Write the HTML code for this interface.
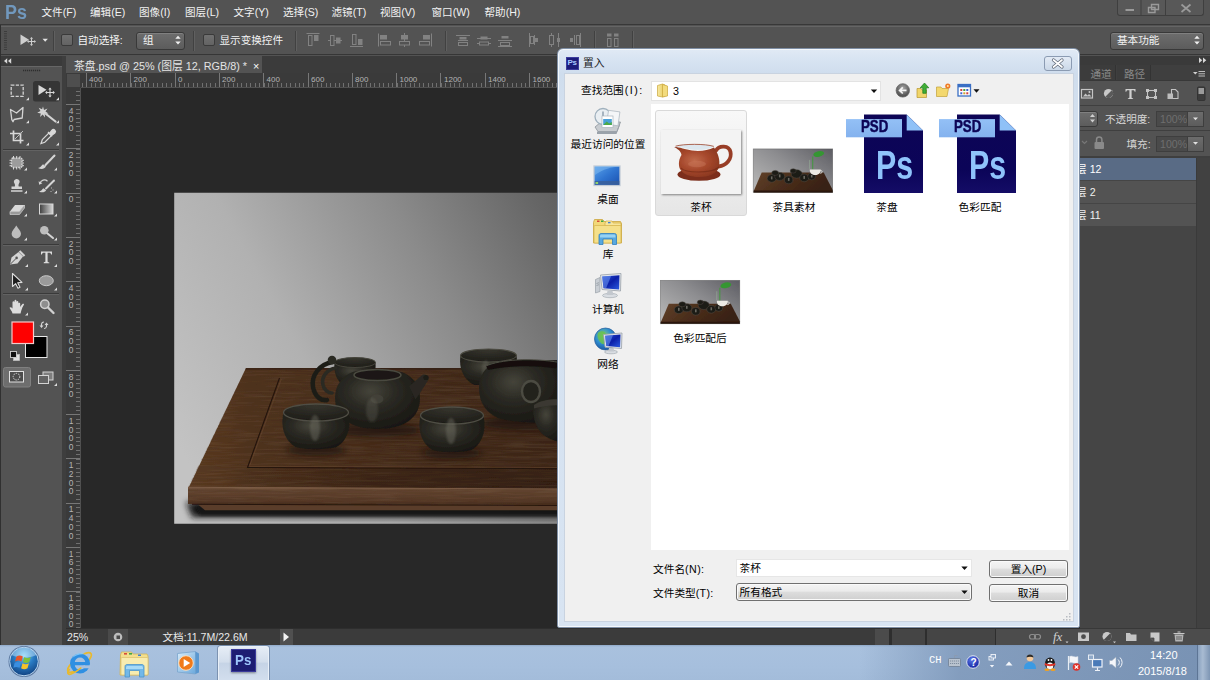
<!DOCTYPE html>
<html lang="zh-CN">
<head>
<meta charset="utf-8">
<title>Photoshop - 置入</title>
<style>
*{box-sizing:border-box;margin:0;padding:0}
html,body{width:1210px;height:680px;overflow:hidden;background:#535353}
body{position:relative;font-family:"Liberation Sans","Noto Sans CJK SC",sans-serif;font-size:10.6px;color:#ececec}
.a{position:absolute}
.t{position:absolute;white-space:nowrap;line-height:14px;font-size:10.6px}
svg{position:absolute;left:0;top:0;overflow:visible}
/* ---------- Photoshop chrome ---------- */
#menubar{left:0;top:0;width:1210px;height:25px;background:#535353;border-bottom:1px solid #383838}
#menubar .t{top:5px;color:#f2f2f2}
#pslogo{left:5px;top:0px;font-size:19.5px;font-weight:bold;color:#7198bd;line-height:24px;transform:scaleX(.92);transform-origin:0 0}
#winbtns{left:1117px;top:0;width:87px;height:16px;border:1px solid #3f3f3f;border-top:none;border-radius:0 0 3px 3px;background:#585858}
#optbar{left:0;top:26px;width:1210px;height:29px;background:#535353;border-top:1px solid #656565;border-bottom:1px solid #363636}
#optbar .t{top:6.3px;color:#f2f2f2}
.chk{position:absolute;width:12px;height:12px;border-radius:2px;background:linear-gradient(#707070,#636363);border:1px solid #3a3a3a}
.vsep{position:absolute;top:4px;height:20px;width:2px;border-left:1px solid #414141;border-right:1px solid #606060}
.sel{position:absolute;border:1px solid #393939;border-radius:3px;background:linear-gradient(#6d6d6d,#5c5c5c);box-shadow:inset 0 1px 0 #808080}
#toolcol{left:0;top:56px;width:63px;height:589px;background:#535353;border-left:1px solid #3c3c3c;border-right:1px solid #3a3a3a;box-shadow:inset 0 11px 0 #666}
#toolhead{left:0;top:56px;width:62px;height:10px;background:#3a3a3a}
#toolgap{left:62px;top:56px;width:4px;height:589px;background:#3e3e3e}
#tabbar{left:66px;top:56px;width:1014px;height:17px;background:#3b3b3b}
#tab{left:66px;top:56px;width:196px;height:17px;background:#535353;color:#e4e4e4;font-size:10.8px;line-height:16px;white-space:nowrap;padding-left:8px;padding-top:1.5px}
#hruler{left:66px;top:73px;width:1014px;height:15px;background:#3a3a3a;border-bottom:1px solid #505050}
#hticks{left:81px;top:73px;width:1000px;height:14px;
 background:
 repeating-linear-gradient(90deg,#777 0,#777 1px,transparent 1px,transparent 44.3px) 5.2px 0/100% 14px no-repeat,
 repeating-linear-gradient(90deg,#707070 0,#707070 1px,transparent 1px,transparent 4.43px) 0.75px 10px/100% 4px no-repeat}
#rcorner{left:66px;top:73px;width:15px;height:15px;background:#4e4e4e;border:1px solid #3a3a3a}
#vruler{left:66px;top:88px;width:15px;height:540px;background:#3a3a3a;border-right:1px solid #505050}
#vticks{left:66px;top:88px;width:14px;height:540px;
 background:
 repeating-linear-gradient(180deg,#777 0,#777 1px,transparent 1px,transparent 44.3px) 0 16.1px/14px 100% no-repeat,
 repeating-linear-gradient(180deg,#707070 0,#707070 1px,transparent 1px,transparent 4.43px) 10px 2.8px/4px 100% no-repeat}
.rl{position:absolute;font-size:8px;color:#b4b4b4;line-height:8px;white-space:nowrap}
.vl{position:absolute;left:68px;width:6px;font-size:8.4px;color:#b4b4b4;line-height:8.8px;text-align:center;word-break:break-all}
#canvas{left:81px;top:88px;width:999px;height:540px;background:#282828}
#statusbar{left:66px;top:628px;width:1014px;height:17px;background:#3b3b3b;border-top:1px solid #2e2e2e}
#statusbar .t{top:1px;color:#e8e8e8}
#rightpanels{left:1080px;top:56px;width:130px;height:589px;background:#535353}
</style>
</head>
<body>
<!-- ===== menubar ===== -->
<div id="menubar" class="a">
  <div id="pslogo" class="a">Ps</div>
  <div class="t" style="left:41.5px">文件(F)</div>
  <div class="t" style="left:90px">编辑(E)</div>
  <div class="t" style="left:139px">图像(I)</div>
  <div class="t" style="left:185px">图层(L)</div>
  <div class="t" style="left:233.5px">文字(Y)</div>
  <div class="t" style="left:283px">选择(S)</div>
  <div class="t" style="left:331.5px">滤镜(T)</div>
  <div class="t" style="left:380px">视图(V)</div>
  <div class="t" style="left:431.5px">窗口(W)</div>
  <div class="t" style="left:484.5px">帮助(H)</div>
  <div id="winbtns" class="a"></div>
</div>
<!-- ===== options bar ===== -->
<div id="optbar" class="a">
  <div class="vsep" style="left:53px"></div>
  <div class="chk" style="left:60.5px;top:7px"></div>
  <div class="t" style="left:77.5px">自动选择:</div>
  <div class="sel" style="left:136px;top:5px;width:49px;height:18px"></div>
  <div class="t" style="left:143px">组</div>
  <div class="vsep" style="left:193px"></div>
  <div class="chk" style="left:202.5px;top:7px"></div>
  <div class="t" style="left:219.5px">显示变换控件</div>
  <div class="vsep" style="left:295px"></div>
  <div class="vsep" style="left:445px"></div>
  <div class="vsep" style="left:594px"></div>
  <div class="vsep" style="left:632px"></div>
  <div class="sel" style="left:1110px;top:5px;width:94px;height:17.5px"></div>
  <div class="t" style="left:1117px">基本功能</div>
</div>
<div class="a" style="left:0;top:25px;width:1px;height:620px;background:#303030;z-index:2"></div>
<!-- ===== tools ===== -->
<div id="toolcol" class="a"></div>
<div id="toolhead" class="a"></div>
<div id="toolgap" class="a"></div>
<!-- ===== document ===== -->
<div id="tabbar" class="a"></div>
<div id="tab" class="a">茶盘.psd @ 25% (图层 12, RGB/8) * <span style="margin-left:3px;color:#fff">×</span></div>
<div id="hruler" class="a"></div>
<div id="vruler" class="a"></div>
<div id="canvas" class="a"></div>
<div id="hticks" class="a"></div>
<div id="vticks" class="a"></div>
<div id="rcorner" class="a"></div>
<div class="rl" style="left:89px;top:76px">400</div>
<div class="rl" style="left:133.5px;top:76px">200</div>
<div class="rl" style="left:178px;top:76px">0</div>
<div class="rl" style="left:222px;top:76px">200</div>
<div class="rl" style="left:266.5px;top:76px">400</div>
<div class="rl" style="left:311px;top:76px">600</div>
<div class="rl" style="left:355px;top:76px">800</div>
<div class="rl" style="left:399.5px;top:76px">1000</div>
<div class="rl" style="left:444px;top:76px">1200</div>
<div class="rl" style="left:488px;top:76px">1400</div>
<div class="rl" style="left:532.5px;top:76px">1600</div>
<div class="vl" style="top:106.7px">400</div>
<div class="vl" style="top:151.0px">200</div>
<div class="vl" style="top:195.3px">0</div>
<div class="vl" style="top:239.6px">200</div>
<div class="vl" style="top:283.9px">400</div>
<div class="vl" style="top:328.2px">600</div>
<div class="vl" style="top:372.5px">800</div>
<div class="vl" style="top:416.8px">1000</div>
<div class="vl" style="top:461.1px">1200</div>
<div class="vl" style="top:505.4px">1400</div>
<div class="vl" style="top:549.7px">1600</div>
<div class="vl" style="top:594.0px">1800</div>
<div id="statusbar" class="a">
  <div class="t" style="left:1px">25%</div>
  <div class="a" style="left:42px;top:0;width:20px;height:16px;background:#4a4a4a"></div>
  <div class="t" style="left:96.5px">文档:11.7M/22.6M</div>
  <div class="a" style="left:214px;top:0;width:13px;height:16px;background:#505050"></div>
  <div class="a" style="left:809px;top:0;width:14px;height:16px;background:#4b4b4b"></div>
  <div class="a" style="left:823px;top:0;width:2.5px;height:16px;background:#2e2e2e"></div>
  <div class="a" style="left:825.5px;top:0;width:33.5px;height:16px;background:#454545"></div>
  <div class="a" style="left:859px;top:0;width:2px;height:16px;background:#2e2e2e"></div>
  <div class="a" style="left:861px;top:0;width:67.5px;height:16px;background:#454545"></div>
  <div class="a" style="left:928.5px;top:0;width:1.5px;height:16px;background:#2e2e2e"></div>
  <div class="a" style="left:930px;top:0;width:90px;height:16px;background:#4c4c4c"></div>
</div>
<!-- ===== right panels ===== -->
<div id="rightpanels" class="a"></div>
<!-- ===== canvas picture ===== -->
<svg width="1210" height="680" viewBox="0 0 1210 680">
 <defs>
  <linearGradient id="bgG" gradientUnits="userSpaceOnUse" x1="175" y1="440" x2="620" y2="200"><stop offset="0" stop-color="#c3c3c3"/><stop offset=".3" stop-color="#b1b1b1"/><stop offset=".6" stop-color="#8b8b8b"/><stop offset=".85" stop-color="#666666"/><stop offset="1" stop-color="#545454"/></linearGradient>
  <linearGradient id="woodTop" gradientUnits="userSpaceOnUse" x1="190" y1="0" x2="600" y2="0"><stop offset="0" stop-color="#59391f"/><stop offset=".15" stop-color="#4d301b"/><stop offset=".55" stop-color="#422918"/><stop offset="1" stop-color="#382214"/></linearGradient>
  <linearGradient id="woodFront" x1="0" y1="0" x2="0" y2="1"><stop offset="0" stop-color="#7d5e45"/><stop offset=".14" stop-color="#634530"/><stop offset=".75" stop-color="#553725"/><stop offset="1" stop-color="#3e2617"/></linearGradient>
  <linearGradient id="bandG" gradientUnits="userSpaceOnUse" x1="230" y1="0" x2="380" y2="0"><stop offset="0" stop-color="#1a0d05" stop-opacity="0"/><stop offset="1" stop-color="#1a0d05" stop-opacity=".25"/></linearGradient>
  <radialGradient id="cupG" cx=".42" cy=".35" r=".7"><stop offset="0" stop-color="#45443a"/><stop offset=".4" stop-color="#2b2a24"/><stop offset="1" stop-color="#171611"/></radialGradient>
  <radialGradient id="cupIn" cx=".5" cy=".1" r=".9"><stop offset="0" stop-color="#35342d"/><stop offset="1" stop-color="#1d1c17"/></radialGradient>
  <linearGradient id="hl" x1="0" x2="1"><stop offset="0" stop-color="#8a897c" stop-opacity="0"/><stop offset=".5" stop-color="#8a897c" stop-opacity=".55"/><stop offset="1" stop-color="#8a897c" stop-opacity="0"/></linearGradient>
  <filter id="bl1" x="-20%" y="-20%" width="140%" height="140%"><feGaussianBlur stdDeviation="1.100"/></filter>
  <filter id="bl3" x="-20%" y="-80%" width="140%" height="260%"><feGaussianBlur stdDeviation="3.200"/></filter>
  <filter id="soft" x="-5%" y="-5%" width="110%" height="110%"><feGaussianBlur stdDeviation=".550"/></filter>
  <filter id="grain" x="0" y="0" width="100%" height="100%"><feTurbulence type="fractalNoise" baseFrequency=".012 .420" numOctaves="3" seed="7"/><feColorMatrix type="matrix" values="0 0 0 0 .08  0 0 0 0 .04  0 0 0 0 .02  1.100 0 0 0 -.400"/></filter>
  <filter id="grain2" x="0" y="0" width="100%" height="100%"><feTurbulence type="fractalNoise" baseFrequency=".030 .550" numOctaves="2" seed="11"/><feColorMatrix type="matrix" values="0 0 0 0 .55  0 0 0 0 .38  0 0 0 0 .25  1.400 0 0 0 -.620"/></filter>
  <clipPath id="imgClip"><rect x="174.200" y="192.800" width="460" height="331"/></clipPath>
  <clipPath id="trayClip"><path d="M246 368h400v137.500l-458-1.500v-17z"/></clipPath>
 </defs>
 <g clip-path="url(#imgClip)">
  <rect x="174" y="192" width="470" height="333" fill="url(#bgG)"/>
  <!-- ground shadow -->
  <path d="M186 502h461v15.500h-455z" fill="#161616" filter="url(#bl3)"/><path d="M196 506h451v9.500h-447z" fill="#141414" opacity=".85" filter="url(#bl1)"/>
  <g filter="url(#soft)">
  <!-- tray top -->
  <path d="M246 368h400v121h-458z" fill="url(#woodTop)"/>
  <!-- front face -->
  <path d="M188 487l458 2v16.500l-458-1.500z" fill="url(#woodFront)"/>
  <g clip-path="url(#trayClip)"><rect x="186" y="366" width="462" height="142" filter="url(#grain)"/><rect x="186" y="366" width="462" height="142" filter="url(#grain2)" opacity=".18"/></g>
  <path d="M246 368h400v1.800h-401z" fill="#2a170e" opacity=".55"/><path d="M247.500 467.500l400 1.500v20l-459-2z" fill="url(#bandG)"/>
  <!-- groove -->
  <path d="M279.500 378l-32 89.500l400 1.500" fill="none" stroke="#24130a" stroke-width="1.100"/>
  <path d="M281.300 379l-31.800 87.300l398 1.500" fill="none" stroke="#6d4c35" stroke-width=".8" opacity=".6"/>
  <path d="M188 487.300l458 2" stroke="#80604a" stroke-width="1.100" opacity=".75"/>
  <path d="M198 504.500h448v5.800h-441z" fill="#5a3d29"/><path d="M192 504.300l454 1.400" stroke="#26150c" stroke-width="1.100"/>
  </g>
  <!-- contact shadows -->
  <g filter="url(#bl3)" opacity=".6"><ellipse cx="316" cy="450" rx="30" ry="6" fill="#150d07"/><ellipse cx="452" cy="453" rx="30" ry="6" fill="#150d07"/><ellipse cx="378" cy="430" rx="42" ry="7" fill="#150d07"/><ellipse cx="525" cy="423" rx="44" ry="7" fill="#150d07"/></g>
  <g filter="url(#soft)">
  <!-- back left cup -->
  <path d="M334.500 363c-1 9 2 18 9 22h22c7-4 11-13 10-22z" fill="url(#cupG)"/>
  <ellipse cx="355" cy="362.500" rx="20.500" ry="5" fill="url(#cupIn)" stroke="#45443b" stroke-width="1"/>
  <!-- back right cup -->
  <path d="M460.500 356c-2 12 3 24 14 29h28c11-5 16-17 14-29z" fill="url(#cupG)"/>
  <ellipse cx="488.500" cy="355.500" rx="28" ry="6.500" fill="url(#cupIn)" stroke="#4b4a40" stroke-width="1.100"/>
  <ellipse cx="486" cy="370" rx="4" ry="10" fill="#77766a" opacity=".3" filter="url(#bl1)"/>
  <!-- pitcher -->
  <path d="M479 388c0-16 10-26 26-27l56-1v61c-14 2.500-40 2.500-58-1.500c-16-4-24-16-24-31.500z" fill="url(#cupG)"/>
  <path d="M486 366c14-6.500 46-8.500 74-3.500l-4 6c-26-4-48-2.500-68 1.500z" fill="#12110d"/>
  <path d="M486 366c14-6.500 46-8.500 74-3.500" fill="none" stroke="#4d4c43" stroke-width="1"/>
  <ellipse cx="531" cy="391.500" rx="9" ry="10.500" fill="#23221d" stroke="#4c4b42" stroke-width="2.400"/>
  <!-- right edge cup -->
  <path d="M533.500 405c-2 20 8 36 30 37v-42z" fill="url(#cupG)"/>
  <path d="M534 405c6-5 18-6.500 30-5.500v6c-10-1-22 .5-30 3z" fill="#3a3931"/>
  <!-- teapot handle -->
  <path d="M333 362c-14 2-22 14-20 25c2 10 8 14 14 13" fill="none" stroke="#1f1e19" stroke-width="4.600" stroke-linecap="round"/>
  <path d="M336 368c-9 1-15 9-13 17c1 5 5 8 9 8" fill="none" stroke="#2a2923" stroke-width="3.600" stroke-linecap="round"/>
  <circle cx="332" cy="360" r="4.300" fill="#2b2a24"/>
  <!-- teapot body -->
  <path d="M335 398c0-15 10-25 22-27h40c12 2 23 11 23 27c0 18-13 31-43 31c-28 0-42-13-42-31z" fill="url(#cupG)"/>
  <path d="M409 386c5-3 9-8 13.500-11c3-1.500 7 1.500 6 4.500c-3 5-8 13-13 20z" fill="#292822"/>
  <circle cx="426" cy="377.500" r="2.600" fill="#1b1a15"/>
  <ellipse cx="377.500" cy="375" rx="23.500" ry="5.600" fill="#1a1914" stroke="#4a493f" stroke-width="1.500"/>
  <ellipse cx="377" cy="399" rx="6.500" ry="4.500" fill="#45443b" opacity=".8"/>
  <ellipse cx="372" cy="410" rx="6" ry="12" fill="#77766a" opacity=".25" filter="url(#bl1)"/>
  <!-- front left cup -->
  <path d="M283.500 413c-3 12 0 27 12 34c10 3 30 3 41 0c12-7 15-22 12-34z" fill="url(#cupG)"/>
  <ellipse cx="316" cy="412.500" rx="32.500" ry="8.500" fill="url(#cupIn)" stroke="#4f4e44" stroke-width="1.300"/>
  <ellipse cx="315" cy="428" rx="5" ry="13" fill="#77766a" opacity=".4" filter="url(#bl1)"/>
  <!-- middle cup -->
  <path d="M420.500 416c-3 12 0 27 12 34c10 3 29 3 39 0c12-7 15-22 12-34z" fill="url(#cupG)"/>
  <ellipse cx="452" cy="415.500" rx="31.500" ry="8.500" fill="url(#cupIn)" stroke="#4f4e44" stroke-width="1.300"/>
  <ellipse cx="451" cy="431" rx="5" ry="13" fill="#77766a" opacity=".4" filter="url(#bl1)"/>
  </g>
 </g>
</svg>
<!-- ===== tool & option icons (global coords) ===== -->
<svg width="1210" height="680" viewBox="0 0 1210 680">
 <defs>
  <linearGradient id="gGrad" x1="0" x2="1"><stop offset="0" stop-color="#3c3c3c"/><stop offset="1" stop-color="#d8d8d8"/></linearGradient>
 </defs>
 <!-- window buttons -->
 <g stroke="#9a9a9a" fill="none" stroke-width="1.4">
  <path d="M1125.500 10h8.500" stroke-width="2"/><path d="M1151.500 4.500h7v5h-7z M1148.500 7.500h6.500v5h-6.500z" stroke-width="1.400"/><path d="M1181.500 4.500l9 7.500M1190.500 4.500l-9 7.500" stroke-width="1.700"/>
  <path d="M1141 0v16M1165.500 0v16" stroke="#3f3f3f" stroke-width="1"/>
 </g>
 <!-- options bar: grip, move tool, dropdown arrows -->
 <path d="M5.500 31v19" stroke="#3c3c3c" stroke-width="3" stroke-dasharray="1 1.250"/>
 <path d="M20.5 34.5v10.500l8.500-5.200z" fill="#cfcfcf"/>
 <path d="M31.500 38.200v6.600M28.200 41.500h6.600" stroke="#cfcfcf" stroke-width="1.1" fill="none"/>
 <path d="M31.500 37l1.600 1.800h-3.200zM31.500 46l1.600-1.800h-3.200zM27 41.500l1.800-1.600v3.200zM36 41.500l-1.800-1.600v3.200z" fill="#cfcfcf"/>
 <path d="M42.500 38.800h5.400l-2.700 3z" fill="#e4e4e4"/>
 <path d="M175.300 38.800h5.400l-2.700-3zM175.300 41.400h5.400l-2.700 3z" fill="#f0f0f0"/>
 <path d="M1194.300 38.800h5.400l-2.700-3zM1194.300 41.400h5.400l-2.700 3z" fill="#f0f0f0"/>
 <!-- align icons (dimmed) -->
 <g fill="none" stroke="#828282" stroke-width="1">
  <g id="alT"><path d="M306.500 33.500h13"/><rect x="308.500" y="35.500" width="3.500" height="10"/><rect x="314.500" y="35.500" width="3.500" height="5" fill="#828282"/></g>
  <g><path d="M328 40.500h14"/><rect x="330.500" y="35.500" width="3.500" height="10" fill="#535353"/><rect x="336.500" y="38" width="3.500" height="5" fill="#828282"/></g>
  <g><path d="M350 46.500h13"/><rect x="352.500" y="34.500" width="3.500" height="10"/><rect x="358.500" y="39.500" width="3.500" height="5" fill="#828282"/></g>
  <g><path d="M378.500 33.500v13"/><rect x="380.500" y="35.500" width="6" height="3.500" fill="#828282"/><rect x="380.500" y="41.500" width="10" height="3.500"/></g>
  <g><path d="M404.500 33v14"/><rect x="401.500" y="35.500" width="6" height="3.500" fill="#828282"/><rect x="399.500" y="41.500" width="10" height="3.500" fill="#535353"/></g>
  <g><path d="M431.500 33.500v13"/><rect x="423.500" y="35.500" width="6" height="3.500" fill="#828282"/><rect x="419.500" y="41.500" width="10" height="3.500"/></g>
  <g><path d="M456 35.500h14M458 40.500h10"/><rect x="459.500" y="37" width="7" height="2.500" fill="#828282" stroke="none"/><rect x="458.500" y="42.500" width="9" height="3"/></g>
  <g><path d="M477 38.500h14M477 43.500h14"/><rect x="480.500" y="36.500" width="7" height="3" fill="#828282" stroke="none"/><rect x="479.500" y="42" width="9" height="3" fill="#535353"/></g>
  <g><path d="M498 40.500h14M498 46.500h14"/><rect x="501.500" y="36" width="7" height="2.500" fill="#828282" stroke="none"/><rect x="500.500" y="42.500" width="9" height="3"/></g>
  <g><path d="M529.500 33v14M534.500 35v10"/><rect x="530.500" y="36.500" width="3" height="7"/><rect x="535" y="38" width="3" height="4" fill="#828282" stroke="none"/></g>
  <g><path d="M551.500 33v14M558.500 33v14"/><rect x="549.500" y="35.500" width="4" height="9" fill="#535353"/><rect x="557" y="38" width="3" height="4" fill="#828282" stroke="none"/></g>
  <g><path d="M574.500 35v10M580.500 33v14"/><rect x="570" y="38" width="3" height="4" fill="#828282" stroke="none"/><rect x="576.500" y="35.500" width="3" height="9"/></g>
  <g><rect x="607.500" y="38.500" width="3.500" height="8"/><rect x="614.500" y="38.500" width="3.500" height="8"/><rect x="607" y="33.500" width="4.500" height="3" fill="#828282" stroke="none"/><rect x="614" y="33.500" width="4.500" height="3" fill="#828282" stroke="none"/></g>
 </g>
 <!-- toolbox -->
 <path d="M4 61l3.200-2.800v5.600zM8 61l3.200-2.800v5.600z" fill="#d8d8d8"/>
 <path d="M23 70.500h17.500" stroke="#2e2e2e" stroke-width="1.600" stroke-dasharray="1.200 .8"/>
 <rect x="33" y="81" width="27" height="20.500" rx="2.500" fill="#353535"/>
 <g fill="#dcdcdc">
  <path d="M26 100.300h3v-3zM56 100.300h3v-3zM26 123.300h3v-3zM56 123.300h3v-3zM26 145.500h3v-3zM56 145.500h3v-3zM24 170.500h3v-3zM54 170.500h3v-3zM24 193.500h3v-3zM54 193.500h3v-3zM24 216.500h3v-3zM54 216.500h3v-3zM24 240.500h3v-3zM54 240.500h3v-3zM25 267h3v-3zM54 267h3v-3zM25 290.500h3v-3zM54 290.500h3v-3zM25 315.500h3v-3zM54 386h3v-3z"/>
 </g>
 <g stroke="#3a3a3a" stroke-width="1"><path d="M3 149.500h56M3 244.500h56M3 293.500h56"/></g>
 <g stroke="#626262" stroke-width="1"><path d="M3 150.500h56M3 245.500h56M3 294.500h56"/></g>
 <!-- marquee -->
 <rect x="11.200" y="85.200" width="12" height="11.200" fill="none" stroke="#d4d4d4" stroke-width="1.300" stroke-dasharray="3.200 1.400"/>
 <!-- move -->
 <path d="M38.500 85v10l8-5.200z" fill="#d8d8d8"/>
 <path d="M50 88.800v7.400M46.300 92.500h7.400" stroke="#d8d8d8" stroke-width="1.100"/>
 <path d="M50 87.600l1.700 2h-3.400zM50 97.400l1.700-2h-3.400zM45.100 92.500l2-1.700v3.400zM54.900 92.500l-2-1.700v3.400z" fill="#d8d8d8"/>
 <!-- polygonal lasso -->
 <path d="M10.500 109.500l6 3.500l6.500-5.500l-.8 10.500l-8.200 1.500l-1 2.200l-1.200-2z" fill="none" stroke="#d4d4d4" stroke-width="1.300" stroke-linejoin="round"/>
 <!-- magic wand -->
 <path d="M46 114l9.500 7.500" stroke="#d4d4d4" stroke-width="2.200" stroke-linecap="round"/>
 <path d="M43 106.500l1 3.500l3.500-1.500l-2 3l3 2l-3.700.3l.2 3.700l-2.300-3l-2.700 2.500l.8-3.600l-3.600-.6l3.300-1.800l-1.800-3.200l3.400 1.400z" fill="#d4d4d4"/>
 <!-- crop -->
 <path d="M13.500 130.500v10h10M10 133.500h10.500v10" fill="none" stroke="#d8d8d8" stroke-width="1.700"/>
 <path d="M15 139l8-8" stroke="#bdbdbd" stroke-width="1"/>
 <!-- eyedropper -->
 <path d="M41 143.500l1.300-3.800l6.500-6.500l2.500 2.500l-6.500 6.500z" fill="none" stroke="#d8d8d8" stroke-width="1.200"/>
 <path d="M48 132l4.200 4.200M49.500 133.500l2.500-3.300a1.900 1.900 0 0 1 2.800 2.800l-3.300 2.500z" fill="#d8d8d8" stroke="#d8d8d8" stroke-width="1.300"/>
 <!-- spot healing / patch -->
 <rect x="11.500" y="158" width="10.500" height="9.500" rx="1.500" fill="#9c9c9c" stroke="#d8d8d8" stroke-width="1.300" stroke-dasharray="1.600 1.100"/>
 <path d="M13.500 156v2M16.700 156v2M20 156v2M13.500 167.500v2M16.700 167.500v2M20 167.500v2M9.500 160.300h2M9.500 163h2M9.500 165.700h2M22 160.300h2M22 163h2M22 165.700h2" stroke="#d8d8d8" stroke-width="1"/>
 <!-- brush -->
 <path d="M54.500 155.500l-9 9.500" stroke="#d4d4d4" stroke-width="2" stroke-linecap="round"/>
 <path d="M38 168c2.500-.3 3.500-2.800 5-3.800l3 2.300c-1.500 2.500-4.500 3.300-8 1.500z" fill="#d4d4d4"/>
 <!-- stamp -->
 <path d="M16.800 179a2.800 2.800 0 0 1 2.200 4.600c-.6.900-.6 1.900-.3 2.900h3.300v2.500h-10.500v-2.500h3.300c.3-1 .3-2-.3-2.900a2.800 2.800 0 0 1 2.300-4.600z" fill="#d4d4d4"/>
 <path d="M11 191h11.500" stroke="#d4d4d4" stroke-width="1.500"/>
 <!-- history brush -->
 <path d="M54 180.500l-8 8" stroke="#d4d4d4" stroke-width="1.900" stroke-linecap="round"/>
 <path d="M39 191.500c2.300-.2 3.200-2.400 4.500-3.300l2.600 2c-1.300 2.200-4 2.900-7.100 1.300z" fill="#d4d4d4"/>
 <path d="M40 183.500a4.500 4.500 0 0 1 7.500-2.300" fill="none" stroke="#d4d4d4" stroke-width="1.200"/>
 <path d="M38.600 181.200l.6 3.600l3.200-1.600z" fill="#d4d4d4"/>
 <path d="M51.500 187.500v1M53 189.500v1M51 191v1" stroke="#bbb" stroke-width="1"/>
 <!-- eraser -->
 <path d="M10 211.500l5-6.500h9.500l-5 6.500z" fill="#d8d8d8"/>
 <path d="M10 211.500h9.500l5-6.500v3l-5 6.500h-9.500z" fill="#9a9a9a" stroke="#d0d0d0" stroke-width=".7"/>
 <!-- gradient -->
 <rect x="39.500" y="204" width="13.500" height="10" fill="url(#gGrad)" stroke="#d8d8d8" stroke-width="1"/>
 <!-- blur drop -->
 <path d="M16.300 225.500c1.800 3 4.700 5.500 4.700 8.300a4.700 4.700 0 0 1-9.400 0c0-2.800 2.900-5.300 4.700-8.300z" fill="#bdbdbd"/>
 <!-- dodge -->
 <circle cx="44.300" cy="230.300" r="4.300" fill="#bdbdbd"/>
 <path d="M47.500 233.500l5.500 4.500" stroke="#d4d4d4" stroke-width="2" stroke-linecap="round"/>
 <!-- pen -->
 <path d="M10 264.500l1.500-7l7-5.500l4.500 4.500l-5.500 7z" fill="#d4d4d4"/>
 <path d="M10.500 264l5.500-5.500" stroke="#535353" stroke-width="1"/>
 <circle cx="16.600" cy="257.900" r="1.300" fill="#535353"/>
 <path d="M19.500 251l5 5" stroke="#d4d4d4" stroke-width="2.200"/>
 <!-- type -->
 <path d="M41 251.500h11v3h-.9c-.2-1.300-.8-1.800-2.100-1.800h-1.400v8.500c0 .9.500 1.100 1.700 1.200v.8h-5.600v-.8c1.200-.1 1.700-.3 1.700-1.200v-8.500h-1.400c-1.300 0-1.900.5-2.100 1.800h-.9z" fill="#dcdcdc"/>
 <!-- path select -->
 <path d="M12.500 273.500v13l3.200-2.800l2.300 4.600l2-1l-2.300-4.500l4.300-.4z" fill="#1e1e1e" stroke="#dcdcdc" stroke-width="1.100" stroke-linejoin="round"/>
 <!-- ellipse -->
 <ellipse cx="46.300" cy="280.700" rx="7" ry="5" fill="#9a9a9a" stroke="#c8c8c8" stroke-width="1"/>
 <!-- hand -->
 <path d="M12.500 313.500c-.5-2.500-2.200-4-3-5.800c.8-1 2-.5 3 .8v-6.300c0-1.200 1.700-1.200 1.800 0l.2-1.500c.2-1.200 1.800-1.200 1.900 0l.1 1c.3-1.100 1.800-1 1.900.2v1.400c.4-1 1.800-.8 1.800.4v3.300c.7-1.400 1.600-2.400 2.500-3.200c.9-.5 1.600.2 1.200 1c-1.200 2-2 3.800-2.500 5.500c-.4 1.300-.6 2.300-.8 3.200z" fill="#dcdcdc"/>
 <!-- zoom -->
 <circle cx="44.800" cy="304.300" r="4.200" fill="#8e8e8e" stroke="#d0d0d0" stroke-width="1.500"/>
 <path d="M48 307.500l5.500 5.500" stroke="#d0d0d0" stroke-width="2.400" stroke-linecap="round"/>
 <!-- colours -->
 <rect x="25.500" y="336.500" width="21.500" height="21" fill="#000" stroke="#e8e8e8" stroke-width="1"/>
 <rect x="12" y="322" width="21.500" height="21.500" fill="#fe0000" stroke="#f3c9c9" stroke-width="1.200"/>
 <path d="M41.500 326.500v-2.500a2.500 2.500 0 0 1 2.500-2M46.500 324v2.500a2.500 2.500 0 0 1-2.500 2" fill="none" stroke="#d4d4d4" stroke-width="1.200"/>
 <path d="M39.500 325.500h4l-2 2.600zM48.500 325h-4l2-2.600z" fill="#d4d4d4"/>
 <rect x="13.500" y="354.500" width="6" height="6" fill="#e0e0e0" stroke="#bdbdbd" stroke-width=".8"/>
 <rect x="10.500" y="351.500" width="6" height="6" fill="#111" stroke="#d0d0d0" stroke-width=".9"/>
 <!-- quick mask -->
 <rect x="3.500" y="367.500" width="27" height="19.500" rx="2" fill="#6e6e6e" stroke="#808080" stroke-width="1"/>
 <rect x="9.500" y="371.500" width="14" height="10.500" fill="#4c4c4c" stroke="#e0e0e0" stroke-width="1"/>
 <circle cx="16.500" cy="376.700" r="3.300" fill="none" stroke="#e0e0e0" stroke-width="1" stroke-dasharray="1.400 1"/>
 <!-- screen mode -->
 <rect x="43" y="372" width="10" height="8" fill="#7e7e7e" stroke="#d4d4d4" stroke-width="1"/>
 <rect x="38.500" y="375.500" width="10" height="8" fill="#636363" stroke="#d4d4d4" stroke-width="1"/>
 <!-- status bar icons -->
 <circle cx="118" cy="637" r="4.300" fill="#bdbdbd"/><rect x="116.500" y="635.500" width="3.500" height="3.500" fill="#4a4a4a"/>
 <path d="M283.500 632.500v9l5.500-4.500z" fill="#f4f4f4"/>
</svg>
<!-- ===== right panel (layers) ===== -->
<style>
#rp .t{color:#dcdcdc}
.dim{color:#898989!important}
.inp{position:absolute;background:#4a4a4a;border:1px solid #3e3e3e;height:16px}
.dbtn{position:absolute;background:linear-gradient(#6c6c6c,#5c5c5c);border:1px solid #3e3e3e;height:16px;width:17px}
</style>
<div id="rp">
 <div class="a" style="left:1080px;top:56px;width:130px;height:9px;background:#3a3a3a"></div>
 <div class="a" style="left:1080px;top:65px;width:130px;height:16px;background:#3f3f3f;border-bottom:1px solid #383838"></div>
 <div class="a" style="left:1080px;top:65px;width:36px;height:15px;background:#3c3c3c;border-right:1px solid #333"></div>
 <div class="a" style="left:1117px;top:65px;width:34px;height:15px;background:#3c3c3c;border-right:1px solid #333"></div>
 <div class="t dim" style="left:1090.500px;top:66.500px">通道</div>
 <div class="t dim" style="left:1124px;top:66.500px">路径</div>
 <div class="a" style="left:1080px;top:105px;width:130px;height:1px;background:#3f3f3f"></div>
 <div class="a" style="left:1080px;top:130px;width:130px;height:1px;background:#3f3f3f"></div>
 <div class="a" style="left:1080px;top:155.500px;width:130px;height:2px;background:#3f3f3f"></div>
 <!-- blend mode select end -->
 <div class="sel" style="left:1060px;top:111px;width:38px;height:16px"></div>
 <div class="t" style="left:1105px;top:112px;color:#d6d6d6">不透明度:</div>
 <div class="inp" style="left:1156px;top:111px;width:32px"></div>
 <div class="t dim" style="left:1160px;top:112px;color:#6e6e6e!important">100%</div>
 <div class="dbtn" style="left:1187px;top:111px"></div>
 <div class="t" style="left:1126.500px;top:136.500px;color:#d6d6d6">填充:</div>
 <div class="inp" style="left:1156px;top:135.500px;width:32px"></div>
 <div class="t dim" style="left:1160px;top:136.500px;color:#6e6e6e!important">100%</div>
 <div class="dbtn" style="left:1187px;top:135.500px"></div>
 <!-- layers -->
 <div class="a" style="left:1080px;top:157.500px;width:130px;height:471px;background:#454545"></div>
 <div class="a" style="left:1080px;top:157.500px;width:116px;height:22px;background:#596b85"></div>
 <div class="a" style="left:1080px;top:180.500px;width:116px;height:22px;background:#535353"></div>
 <div class="a" style="left:1080px;top:203.500px;width:116px;height:22.500px;background:#535353"></div>
 <div class="a" style="left:1196px;top:157.500px;width:14px;height:471px;background:#414141;border-left:1px solid #3a3a3a"></div>
 <div class="t" style="left:1065.500px;top:161.500px;color:#fff">图层 12</div>
 <div class="t" style="left:1065.500px;top:184.500px;color:#f0f0f0">图层 2</div>
 <div class="t" style="left:1065.500px;top:207.500px;color:#f0f0f0">图层 11</div>
 <!-- bottom bar -->
 <div class="a" style="left:1080px;top:628px;width:130px;height:17px;background:#4c4c4c;border-top:1px solid #383838"></div>
</div>
<svg width="1210" height="680" viewBox="0 0 1210 680">
 <path d="M1199 57.500l3.300 2.800l-3.300 2.800zM1203 57.500l3.300 2.800l-3.300 2.800z" fill="#d8d8d8"/>
 <path d="M1193 72h4.600l-2.300 2.600z" fill="#d0d0d0"/><path d="M1198.500 71.500h6.500M1198.500 73.800h6.500M1198.500 76h6.500" stroke="#bdbdbd" stroke-width="1"/>
 <!-- filter icons -->
 <rect x="1081.500" y="89.500" width="11" height="8.500" fill="none" stroke="#c4c4c4" stroke-width="1.200"/><path d="M1083 96.500l2.500-3l2 2l1.500-1.500l2.500 2.500z" fill="#c4c4c4"/><circle cx="1089.500" cy="92" r="1" fill="#c4c4c4"/>
 <circle cx="1108.500" cy="93.500" r="4.600" fill="#c8c8c8"/><path d="M1105.300 96.700a4.600 4.600 0 0 0 6.500-6.500z" fill="#5a5a5a"/>
 <path d="M1125.500 89h10v2.700h-.8c-.2-1.100-.7-1.500-1.800-1.500h-1.300v7c0 .8.400 1 1.500 1.100v.7h-5.200v-.7c1.100-.1 1.500-.3 1.500-1.100v-7h-1.300c-1.100 0-1.600.4-1.800 1.500h-.8z" fill="#d0d0d0"/>
 <rect x="1147.500" y="90.500" width="8" height="7" fill="none" stroke="#c4c4c4" stroke-width="1.100"/><path d="M1146 89h3v3h-3zM1154 89h3v3h-3zM1146 96h3v3h-3zM1154 96h3v3h-3z" fill="#c4c4c4"/>
 <path d="M1171.500 89.500h4l2.500 2.500v6.500h-6.500z" fill="none" stroke="#c4c4c4" stroke-width="1.100"/><rect x="1167.500" y="93.500" width="5.500" height="5.500" fill="#bdbdbd"/>
 <rect x="1197.500" y="87" width="7.500" height="13.500" rx="1" fill="#3c3c3c" stroke="#333" stroke-width="1"/><rect x="1198.500" y="88" width="5.500" height="6" fill="#9a9a9a"/>
 <!-- row arrows -->
 <path d="M1090 117h5l-2.500-3zM1090 119.500h5l-2.500 3z" fill="#cfcfcf"/>
 <path d="M1193 117.500h5l-2.500 2.800zM1193 142h5l-2.500 2.800z" fill="#e0e0e0"/>
 <path d="M1082 141l2.500 2.500l2.500-2.500" fill="none" stroke="#777" stroke-width="1.200"/>
 <!-- lock -->
 <rect x="1094.500" y="142" width="9.500" height="7" rx="1" fill="#8a8a8a"/><path d="M1096.500 142v-2.200a2.700 2.700 0 0 1 5.400 0v2.200" fill="none" stroke="#8a8a8a" stroke-width="1.500"/>
 <!-- bottom icons -->
 <g fill="none" stroke="#8c8c8c" stroke-width="1.200"><rect x="1029.500" y="634.500" width="6" height="4.500" rx="2.200"/><rect x="1034.500" y="634.500" width="6" height="4.500" rx="2.200"/></g>
 <rect x="1078" y="632.500" width="11" height="8.500" fill="#c8c8c8"/><circle cx="1083.500" cy="636.700" r="2.400" fill="#4c4c4c"/>
 <circle cx="1107" cy="636.500" r="4.500" fill="#c8c8c8"/><path d="M1103.800 639.700a4.500 4.500 0 0 0 6.400-6.400z" fill="#4c4c4c"/><path d="M1113 641.500h3l-1.500 1.700zM1065.500 641.500h3l-1.500 1.700z" fill="#c8c8c8"/>
 <path d="M1126 633h4l1 1.500h5.500v6.500h-10.500z" fill="#c4c4c4"/>
 <path d="M1150.500 632.500h9v9h-5.500l-3.500-3.500z" fill="#c8c8c8"/><path d="M1150.500 638h3.500v3.500" fill="#4c4c4c" stroke="#4c4c4c" stroke-width=".8"/>
 <path d="M1174.500 634.500h9l-.8 7h-7.400z" fill="#b4b4b4"/><path d="M1173.500 633.500h11M1177.500 632h3" stroke="#c8c8c8" stroke-width="1.200"/><path d="M1177 636v4M1179 636v4M1181 636v4" stroke="#4c4c4c" stroke-width=".8"/>
</svg>
<div class="t" style="left:1053px;top:629.500px;font-family:'Liberation Serif',serif;font-style:italic;font-size:13px;color:#d0d0d0">fx</div>
<!-- ===== Place dialog (global coords) ===== -->
<style>
#dlg .t{color:#000;font-size:10.7px}
#dframe{left:557px;top:48px;width:523px;height:580px;border-radius:6px 6px 2px 2px;border:1px solid #7f8fa5;
 background:linear-gradient(#e1eaf5 0,#d8e4f2 10px,#cfdded 25px,#d3e0ef 60px,#d8e4f2 100%);box-shadow:inset 0 0 0 1px #f4f8fc}
#dclient{left:564px;top:73px;width:510px;height:549px;background:#f0f0f0;border:1px solid #c9d3e0}
#flist{left:651px;top:104px;width:418px;height:446px;background:#fff}
#combo{left:651px;top:81px;width:230px;height:20px;background:#fff;border:1px solid #e3e3e3}
#fname{left:736px;top:559px;width:236px;height:18px;background:#fff;border:1px solid #e6e6e6}
#ftype{left:736px;top:583px;width:236px;height:18px;border:1px solid #707070;border-radius:3px;background:linear-gradient(#f4f4f4,#ebebeb 45%,#dddddd 50%,#cfcfcf);box-shadow:inset 0 0 0 1px #fafafa}
.wbtn{position:absolute;left:989px;width:79px;height:18px;border:1px solid #707070;border-radius:3px;background:linear-gradient(#f4f4f4,#ebebeb 45%,#dddddd 50%,#cfcfcf);box-shadow:inset 0 0 0 1px #fafafa;color:#000;font-size:10.7px;line-height:16px;text-align:center}
#closeb{left:1044px;top:56px;width:28px;height:15px;border:1px solid #8b9bb2;border-radius:3px;background:linear-gradient(#e3ebf5,#cbd8e8)}
#selitem{left:655px;top:110px;width:92px;height:106px;border:1px solid #d9d9d9;border-radius:3px;background:linear-gradient(#f8f8f8,#e6e6e6)}
.thumb1{left:660.500px;top:129.500px;width:80px;height:64px;background:#f3f3f3;box-shadow:1px 1px 2px rgba(0,0,0,.45)}
.pl{position:absolute;width:100px;text-align:center;color:#000;font-size:10.7px;line-height:14px;white-space:nowrap}
</style>
<div id="dlg">
 <div id="dframe" class="a"></div>
 <div id="dclient" class="a"></div>
 <div class="a" style="left:566px;top:57px;width:13px;height:12.500px;background:#1b1b7a;border:1px solid #3c3c9c"></div>
 <div class="t" style="left:567.500px;top:57px;font-size:8px;font-weight:bold;color:#a8c8ff!important;line-height:12px;letter-spacing:-.3px"><span style="color:#a8c8ff">Ps</span></div>
 <div class="t" style="left:583px;top:56px;font-size:10.800px;color:#1a1a1a">置入</div>
 <div id="closeb" class="a"></div>
 <div class="t" style="left:581px;top:82.500px">查找范围<span style="letter-spacing:1.5px;margin-left:1px">(I):</span></div>
 <div id="combo" class="a"></div>
 <div class="t" style="left:673px;top:84px">3</div>
 <div id="flist" class="a"></div>
 <!-- places bar labels -->
 <div class="pl" style="left:558px;top:137px">最近访问的位置</div>
 <div class="pl" style="left:558px;top:192px">桌面</div>
 <div class="pl" style="left:558px;top:247px">库</div>
 <div class="pl" style="left:558px;top:302px">计算机</div>
 <div class="pl" style="left:558px;top:357px">网络</div>
 <!-- items -->
 <div id="selitem" class="a"></div>
 <div class="a thumb1"></div>
 <div class="pl" style="left:651px;top:200px">茶杯</div>
 <div class="pl" style="left:744px;top:200px">茶具素材</div>
 <div class="pl" style="left:837px;top:200px">茶盘</div>
 <div class="pl" style="left:930px;top:200px">色彩匹配</div>
 <div class="pl" style="left:650px;top:331px">色彩匹配后</div>
 <!-- bottom -->
 <div class="t" style="left:653px;top:562px">文件名<span style="letter-spacing:.4px">(N):</span></div>
 <div class="t" style="left:653px;top:585.500px">文件类型<span style="letter-spacing:.3px">(T):</span></div>
 <div id="fname" class="a"></div>
 <div class="t" style="left:739.500px;top:560.500px">茶杯</div>
 <div id="ftype" class="a"></div>
 <div class="t" style="left:739.500px;top:585px">所有格式</div>
 <div class="wbtn" style="top:560px">置入(P)</div>
 <div class="wbtn" style="top:584px">取消</div>
</div>
<!--DLGSVG-->
<svg width="1210" height="680" viewBox="0 0 1210 680">
 <defs>
  <linearGradient id="fold" x1="0" y1="0" x2="1" y2="0"><stop offset="0" stop-color="#f8e9a0"/><stop offset="1" stop-color="#e5c85a"/></linearGradient>
  <linearGradient id="psdBody" x1="0" y1="0" x2="0" y2="1"><stop offset="0" stop-color="#0d0556"/><stop offset=".7" stop-color="#0b0458"/><stop offset="1" stop-color="#140c66"/></linearGradient>
  <linearGradient id="psdLab" x1="0" y1="0" x2="0" y2="1"><stop offset="0" stop-color="#93c0f6"/><stop offset="1" stop-color="#84b2ee"/></linearGradient>
  <linearGradient id="thG" gradientUnits="objectBoundingBox" x1="0" y1=".8" x2="1" y2="0"><stop offset="0" stop-color="#b4b4b4"/><stop offset=".5" stop-color="#8d8d90"/><stop offset="1" stop-color="#5d5d63"/></linearGradient>
  <linearGradient id="thTray" x1="0" y1="0" x2="1" y2=".3"><stop offset="0" stop-color="#62422a"/><stop offset=".5" stop-color="#4a2d1b"/><stop offset="1" stop-color="#382113"/></linearGradient>
  <linearGradient id="deskG" x1="0" y1="0" x2="1" y2="1"><stop offset="0" stop-color="#5aa2ea"/><stop offset=".5" stop-color="#2f74d0"/><stop offset="1" stop-color="#1a4fae"/></linearGradient>
  <linearGradient id="scrG" x1="0" y1="0" x2="1" y2="1"><stop offset="0" stop-color="#2a52d8"/><stop offset=".5" stop-color="#0b1fa8"/><stop offset="1" stop-color="#2a5ae0"/></linearGradient>
  <radialGradient id="backG" cx=".5" cy=".35" r=".7"><stop offset="0" stop-color="#a8a8a8"/><stop offset="1" stop-color="#3c3c3c"/></radialGradient>
  <radialGradient id="potG" cx=".45" cy=".45" r=".65"><stop offset="0" stop-color="#c06a4b"/><stop offset=".5" stop-color="#a5472b"/><stop offset="1" stop-color="#86351f"/></radialGradient>
  <radialGradient id="globeG" cx=".4" cy=".35" r=".7"><stop offset="0" stop-color="#8fd46a"/><stop offset=".5" stop-color="#2f8fd0"/><stop offset="1" stop-color="#1a4f9e"/></radialGradient>
  <filter id="b06" x="-10%" y="-10%" width="120%" height="120%"><feGaussianBlur stdDeviation=".7"/></filter>
  <g id="teathumb">
   <rect x="0" y="0" width="79.500" height="43.500" fill="url(#thG)"/>
   <path d="M8.500 23.500h62l9 17.500v2.500h-79v-1.500z" fill="url(#thTray)"/>
   <path d="M.5 41.500h79v2h-79z" fill="#2a170e"/>
   <g fill="#1d1a16" stroke="#4e4c44" stroke-width=".5"><ellipse cx="18.500" cy="29.500" rx="4.500" ry="3.800"/><ellipse cx="26.500" cy="27.500" rx="5" ry="4"/><ellipse cx="22" cy="24" rx="3.500" ry="2.500"/><ellipse cx="35.500" cy="31" rx="4.200" ry="3.800"/><ellipse cx="43.500" cy="25" rx="5.500" ry="4.200"/><ellipse cx="51" cy="29" rx="4.500" ry="3.800"/><ellipse cx="58.500" cy="27.500" rx="4" ry="3.500"/><ellipse cx="40" cy="22" rx="3" ry="2.200"/></g>
   <g fill="#8a8880" opacity=".7"><rect x="17.700" y="27.500" width="1.600" height="3"/><rect x="25.700" y="25.500" width="1.600" height="3"/><rect x="34.700" y="29" width="1.600" height="3"/><rect x="50.200" y="27" width="1.600" height="3"/><rect x="57.700" y="26" width="1.600" height="2.600"/></g>
   <path d="M59.500 20.500v-13" stroke="#3f9a3a" stroke-width="1.200" opacity=".8"/><path d="M56.500 20v-9" stroke="#9ab89a" stroke-width=".8" opacity=".7"/>
   <ellipse cx="65.500" cy="5" rx="5.500" ry="2.800" fill="#2f9a2c" opacity=".9" transform="rotate(-12 65.500 5)"/>
   <path d="M56.500 20.500h11c0 3-1.500 5.500-5.500 5.500s-5.500-2.500-5.500-5.500z" fill="#eceae4"/><path d="M67 21.500c2.500-.5 2.500 3 0 2.800" fill="none" stroke="#e4e2dc" stroke-width="1"/>
  </g>
  <g id="psdicon">
   <path d="M18 0h42.700l16.300 16v62.300h-59z" fill="url(#psdBody)"/>
   <path d="M60.700 0l16.300 16h-16.300z" fill="#8fc1f7"/>
   <rect x="0" y="4.500" width="56" height="18.200" fill="url(#psdLab)"/>
  </g>
 </defs>
 <!-- close X -->
 <path d="M1053.500 60l8.500 7M1062 60l-8.500 7" stroke="#5d6675" stroke-width="3.200" stroke-linecap="round"/>
 <path d="M1053.500 60l8.500 7M1062 60l-8.500 7" stroke="#fff" stroke-width="1.700" stroke-linecap="round"/>
 <!-- combo folder + arrows -->
 <path d="M657.500 85.500l5-1.500l2.500 1v11l-2.500 1l-5-1z" fill="url(#fold)" stroke="#c9a53a" stroke-width=".7"/>
 <path d="M662.500 84.500l5 1.500v10l-5 1z" fill="#f3dc7e" stroke="#c9a53a" stroke-width=".7"/>
 <path d="M870.800 89.500h6.400l-3.200 3.600z" fill="#111"/>
 <path d="M961.300 566.500h6.400l-3.200 3.600zM961.300 590.500h6.400l-3.200 3.600z" fill="#111"/>
 <!-- toolbar: back -->
 <circle cx="902.800" cy="90.400" r="6.700" fill="url(#backG)" stroke="#6a6a6a" stroke-width=".8"/>
 <path d="M906.500 90.400h-6.500M902.800 87.300l-3.200 3.100l3.200 3.100" fill="none" stroke="#f4f4f4" stroke-width="1.700"/>
 <!-- up folder -->
 <path d="M917 88.500h4l1 1.500h4.500v7.500h-9.500z" fill="#f0d56a" stroke="#b8962e" stroke-width=".7"/>
 <path d="M924.500 83l4.300 4.800h-2.600v5.500h-3.400v-5.500h-2.600z" fill="#3fae35" stroke="#1e7a1c" stroke-width=".7"/>
 <!-- new folder -->
 <path d="M936.500 87h4.500l1 1.500h6.500l-1.500 8h-10.500z" fill="#f3d86e" stroke="#c2a038" stroke-width=".7"/>
 <circle cx="947.800" cy="86" r="2.600" fill="#f07a28"/><circle cx="947.800" cy="86" r="1" fill="#ffe9a8"/>
 <!-- view menu -->
 <rect x="958" y="84.500" width="12.500" height="11.500" fill="#fff" stroke="#3a6fc4" stroke-width="1.300"/><rect x="958" y="84.500" width="12.500" height="2.800" fill="#3a6fc4"/>
 <g><rect x="960.300" y="89" width="2" height="2" fill="#d04040"/><rect x="963.300" y="89" width="2" height="2" fill="#40a040"/><rect x="966.300" y="89" width="2" height="2" fill="#4060d0"/><rect x="960.300" y="92.300" width="2" height="2" fill="#4060d0"/><rect x="963.300" y="92.300" width="2" height="2" fill="#d0a030"/><rect x="966.300" y="92.300" width="2" height="2" fill="#d04040"/></g>
 <path d="M973.500 89.300h6l-3 3.400z" fill="#111"/>
 <!-- places: recent -->
 <g>
  <path d="M595 127l6-5h19.500l-3.500 9.500h-19z" fill="#c8ccd0" stroke="#8e959c" stroke-width=".8"/>
  <path d="M597 131.500h19.500l3.500-9v2.500l-3.500 9h-19.500z" fill="#9aa2aa"/>
  <circle cx="603" cy="116.500" r="8" fill="#e9eef2" stroke="#9fb0bd" stroke-width="1.300"/><path d="M603 111.500v5.500h4" fill="none" stroke="#6f8597" stroke-width="1.100"/>
  <rect x="607.500" y="111" width="11.500" height="14" fill="#f4f6f8" stroke="#aab4be" stroke-width=".7" transform="rotate(8 613 118)"/>
  <rect x="602" y="116" width="11" height="11.500" fill="#fff" stroke="#aab4be" stroke-width=".7"/>
  <rect x="603.200" y="119" width="8.600" height="6" fill="#4aa0d8"/><path d="M603.200 125l3.500-3.500l2.500 2l2.600-1.500v3z" fill="#4caa48"/>
 </g>
 <!-- places: desktop -->
 <rect x="594" y="166" width="26" height="19.500" fill="url(#deskG)" stroke="#c2cbd6" stroke-width="1.300"/>
 <path d="M594.700 181h24.600v3.800h-24.600z" fill="#3a5f9a" opacity=".85"/><rect x="595.500" y="182" width="2.600" height="2" fill="#8fd06a"/>
 <path d="M595 175c8-6 17-8 24.500-8.500v-.5h-24.500z" fill="#8cc4f4" opacity=".45"/>
 <!-- places: library -->
 <g>
  <path d="M593.500 222.500l1-3h8l1.500 2h16.500l1 2v19.500h-28z" fill="#f2d878" stroke="#caa53e" stroke-width=".8"/>
  <path d="M605 223.500l1-2.500h6l1.200 2h7.800v3h-16z" fill="#f7e59a" stroke="#caa53e" stroke-width=".6"/>
  <rect x="594" y="225.500" width="27" height="17.500" rx="1" fill="#f5e08a" stroke="#d4b24a" stroke-width=".7"/>
  <rect x="597" y="220.500" width="2.500" height="1.500" fill="#d84a3a"/><rect x="601" y="220.500" width="2.500" height="1.500" fill="#3fa845"/><rect x="608" y="222" width="2.500" height="1.300" fill="#3f7fd8"/>
  <path d="M599 244.500v-9c0-1.200.8-2 2-2h13.500c1.200 0 2 .8 2 2v9h-4v-5.500h-9.500v5.500z" fill="#58a8e0" stroke="#2f7fc0" stroke-width=".8"/>
  <path d="M600 236c0-1 .6-1.600 1.600-1.600h12.300c1 0 1.600.6 1.600 1.600v1.500h-15.500z" fill="#a8dcf8" opacity=".8"/>
 </g>
 <!-- places: computer -->
 <g>
  <path d="M595.500 279.500l4.500-2v14l-4.500 1.500z" fill="#c9ced4" stroke="#8f979f" stroke-width=".6"/><path d="M596.500 283.500l2.500-.8M596.500 285.500l2.500-.8" stroke="#7e868e" stroke-width=".6"/>
  <ellipse cx="610" cy="295.500" rx="7.500" ry="2.200" fill="#d9dde2" stroke="#9aa2aa" stroke-width=".6"/><path d="M607.500 291h5l1 4h-7z" fill="#c3c8ce"/>
  <path d="M600.500 275l20.500-1.500l-.5 17.500l-18.500-1.500z" fill="#e4e8ec" stroke="#98a0a8" stroke-width=".8"/>
  <path d="M602.200 276.500l17.300-1.300l-.4 14.300l-15.600-1.200z" fill="url(#scrG)"/>
  <path d="M602.200 276.500l9-0.700l-5 12.300l-2.700-.2z" fill="#6f9af4" opacity=".55"/>
 </g>
 <!-- places: network -->
 <g>
  <circle cx="605.500" cy="339" r="11" fill="url(#globeG)" stroke="#2a5f9a" stroke-width=".7"/>
  <path d="M598 333c3-3 7-2 8 1s-2 5-1 8s-3 3-5 0s-3-6-2-9z" fill="#6ac24e" opacity=".85"/>
  <ellipse cx="611" cy="352" rx="6.500" ry="1.800" fill="#d9dde2" stroke="#9aa2aa" stroke-width=".6"/><path d="M609 348h4.500l.8 3.500h-6z" fill="#c3c8ce"/>
  <path d="M603.500 334.500l18.500-1.500l-.5 15.500l-16.500-1.300z" fill="#e4e8ec" stroke="#98a0a8" stroke-width=".8"/>
  <path d="M605 335.800l15.500-1.200l-.4 12.600l-13.800-1.100z" fill="url(#scrG)"/>
  <path d="M605 335.800l8-0.600l-4.500 10.900l-2.200-.2z" fill="#6f9af4" opacity=".55"/>
 </g>
 <!-- pitcher thumbnail -->
 <g filter="url(#b06)">
  <ellipse cx="699" cy="174.500" rx="21.500" ry="6.300" fill="#7c2f1b"/>
  <path d="M716 150.500c3-5.500 13-5.500 14.500 1.500c1.500 7-4 13.500-12 14.500" fill="none" stroke="#983e26" stroke-width="3.800" stroke-linecap="round"/>
  <path d="M674 147c3 1.500 7 4 7.500 8c-2.500 4-3.500 9-1.500 14c3 6 12 8 19 8c9 0 18-3 20-10c1.500-7-1-14-5-19.500c-6 3-14 4-22 3c-7-1-12-3.500-18-3.500z" fill="url(#potG)"/>
  <path d="M675.500 146.200c8-2.400 30-2.600 38.300.2c-5.500 3-13.500 4-21.500 3c-6.300-.8-11.300-2.400-16.800-3.200z" fill="#dde7ee"/>
  <path d="M675.500 146.200c8-2.400 30-2.600 38.300.2" fill="none" stroke="#9c4229" stroke-width=".8"/>
  <ellipse cx="697" cy="164" rx="9" ry="3.200" fill="#c9775a" opacity=".45"/>
  <path d="M681 168c4 5 30 6 38-1" fill="none" stroke="#6e2714" stroke-width="1.200" opacity=".6"/>
 </g>
 <!-- tea set thumbnails -->
 <g filter="url(#b06)"><use href="#teathumb" x="753.200" y="148.900"/></g>
 <g filter="url(#b06)"><use href="#teathumb" x="660.300" y="280.300"/></g>
 <rect x="753.200" y="148.900" width="79.500" height="43.500" fill="none" stroke="#4a4a4a" stroke-width=".6" opacity=".6"/>
 <rect x="660.300" y="280.300" width="79.500" height="43.500" fill="none" stroke="#4a4a4a" stroke-width=".6" opacity=".6"/>
 <!-- PSD icons -->
 <use href="#psdicon" x="846" y="114.600"/>
 <use href="#psdicon" x="939" y="114.600"/>
 <!-- resize grip -->
 <g fill="#b8bcc2"><rect x="1069" y="613" width="1.500" height="1.500"/><rect x="1066" y="616" width="1.500" height="1.500"/><rect x="1069" y="616" width="1.500" height="1.500"/><rect x="1063" y="619" width="1.500" height="1.500"/><rect x="1066" y="619" width="1.500" height="1.500"/><rect x="1069" y="619" width="1.500" height="1.500"/></g>
</svg>
<div class="t" style="left:860.500px;top:116.500px;font-size:17px;line-height:20px;font-weight:bold;color:#0d0556;-webkit-text-stroke:.5px #0d0556;transform:scaleX(.78);transform-origin:0 0">PSD</div>
<div class="t" style="left:953.500px;top:116.500px;font-size:17px;line-height:20px;font-weight:bold;color:#0d0556;-webkit-text-stroke:.5px #0d0556;transform:scaleX(.78);transform-origin:0 0">PSD</div>
<div class="t" style="left:875.500px;top:142px;font-size:41px;line-height:46px;font-weight:bold;color:#8fc3fb;transform:scaleX(.74);transform-origin:0 0">Ps</div>
<div class="t" style="left:968.500px;top:142px;font-size:41px;line-height:46px;font-weight:bold;color:#8fc3fb;transform:scaleX(.74);transform-origin:0 0">Ps</div>
<!-- ===== Windows taskbar ===== -->
<style>
#taskbar{left:0;top:645px;width:1210px;height:35px;background:linear-gradient(90deg,rgba(166,191,221,0) 0,rgba(166,191,221,0) 860px,rgba(120,146,180,.75) 960px,rgba(112,138,172,.85) 1210px),linear-gradient(#8fa9c9 0,#a9c1de 2px,#a6bfdd 60%,#a3bcda 100%)}
#psbtn{left:218px;top:646px;width:51px;height:34px;border:1px solid #e9f0f8;border-bottom:none;border-radius:3px 3px 0 0;background:linear-gradient(#e6edf6,#d3deec 45%,#c6d4e6 50%,#d2deed);box-shadow:0 0 0 1px rgba(90,110,140,.55)}
#tray .t{color:#fff;font-size:11px}
</style>
<div id="taskbar" class="a"></div>
<div id="psbtn" class="a"></div>
<div class="a" style="left:231px;top:649px;width:25px;height:22.500px;background:#1d1d72;border:1px solid #3a3a9a;box-shadow:0 1px 2px rgba(0,0,0,.4)"></div>
<div class="t" style="left:234.500px;top:651px;font-size:15.500px;line-height:18px;font-weight:bold;color:#9cc4fa;transform:scaleX(.86);transform-origin:0 0">Ps</div>
<div id="tray">
 <div class="t" style="left:929px;top:653px;font-family:'Liberation Mono',monospace;font-size:10.500px;color:#fff">CH</div>
 <div class="t" style="left:1150px;top:648px;font-size:11px">14:20</div>
 <div class="t" style="left:1138px;top:663.500px;font-size:11px">2015/8/18</div>
 <div class="a" style="left:1197px;top:645px;width:13px;height:35px;border-left:1px solid #5d7595;background:linear-gradient(90deg,#8aa2c0,#a8bbd2 40%,#7e96b4)"></div>
</div>
<svg width="1210" height="680" viewBox="0 0 1210 680">
 <defs>
  <radialGradient id="orbG" cx=".5" cy=".3" r=".75"><stop offset="0" stop-color="#7fd0f4"/><stop offset=".45" stop-color="#2a7cc4"/><stop offset="1" stop-color="#0e3a78"/></radialGradient>
  <radialGradient id="helpG" cx=".4" cy=".3" r=".8"><stop offset="0" stop-color="#5a78e8"/><stop offset="1" stop-color="#0a1a9a"/></radialGradient>
  <linearGradient id="wmpG" x1="0" y1="0" x2="1" y2="1"><stop offset="0" stop-color="#d8ecfa"/><stop offset="1" stop-color="#6aa8dc"/></linearGradient>
 </defs>
 <!-- start orb -->
 <circle cx="24" cy="661.500" r="15.500" fill="#1b3d6e" opacity=".55"/>
 <circle cx="24" cy="661.500" r="14.300" fill="url(#orbG)" stroke="#b8d4ee" stroke-width="1"/>
 <path d="M11.500 655a14.300 14.300 0 0 1 25 0c-8 3.500-17 3.500-25 0z" fill="#d8f0ff" opacity=".45"/>
 <g><path d="M16.500 656.500c2-1.200 4-1.200 6.300 0l-1.400 5c-2.200-1.200-4.200-1.200-6.300 0z" fill="#e8542a"/><path d="M24.300 657c2.200 1.200 4.200 1.200 6.400 0l-1.400 5c-2.200 1.200-4.200 1.200-6.400 0z" fill="#7fc23a"/><path d="M14.700 662.800c2-1.200 4.100-1.200 6.300 0l-1.400 5c-2.200-1.200-4.200-1.200-6.300 0z" fill="#3a8ee0"/><path d="M22.500 663.300c2.200 1.200 4.200 1.200 6.400 0l-1.400 5c-2.200 1.200-4.200 1.200-6.400 0z" fill="#f4c22a"/></g>
 <!-- IE -->
 <g>
  <ellipse cx="79.500" cy="662.500" rx="14.500" ry="5" fill="none" stroke="#e9b92c" stroke-width="1.700" transform="rotate(-38 79.500 662.500)"/>
  <circle cx="80" cy="663.500" r="10" fill="#2f8fe2"/>
  <path d="M72 658a10 10 0 0 1 14-3.500c-5-1-10 .5-14 3.500z" fill="#8fd0fa" opacity=".8"/>
  <path d="M74.800 662a5.200 4.400 0 0 1 10.400 0z" fill="#a9c1de"/>
  <path d="M74.800 665.300a5.200 4.200 0 0 0 10.400 0z" fill="#a9c1de"/>
  <path d="M83.500 665.300h7.500v3h-7.500z" fill="#a8c0dd"/>
  <path d="M69.200 669.500c-2.500 3.500-1.500 5.500 2 4.500c3-.9 6.500-3.200 9.500-6" fill="none" stroke="#e9b92c" stroke-width="1.700" stroke-linecap="round"/>
 </g>
 <!-- explorer -->
 <g>
  <path d="M120.500 655l1-3h10l1.500 2h14l1 2v19h-28z" fill="#f3df8e" stroke="#d2b458" stroke-width=".8"/>
  <rect x="121" y="657.500" width="27" height="17.500" rx="1" fill="#f8ecb0" stroke="#dcc06a" stroke-width=".7"/>
  <rect x="124" y="653" width="3" height="1.600" fill="#d84a3a"/><rect x="129" y="653" width="3" height="1.600" fill="#3fa845"/><rect x="138" y="654.500" width="3" height="1.500" fill="#3f7fd8"/>
  <path d="M125 677v-10.500c0-1.200.8-2 2-2h15c1.200 0 2 .8 2 2v10.500h-4.500v-6.500h-10v6.500z" fill="#72b8e8" stroke="#4a94cc" stroke-width=".8"/>
  <path d="M126 667.500c0-1 .6-1.600 1.600-1.600h13.800c1 0 1.600.6 1.600 1.600v1.500h-17z" fill="#b4e2fa" opacity=".8"/>
 </g>
 <!-- WMP -->
 <g>
  <path d="M177.500 653.500l18-2v22.500l-18-2z" fill="url(#wmpG)" stroke="#7aa4cc" stroke-width=".8"/>
  <path d="M195.500 651.500l3.500 2v19l-3.500 1.500z" fill="#5a98d0"/>
  <circle cx="186" cy="663" r="7.300" fill="#f07a1a" stroke="#fbe0c0" stroke-width="1"/>
  <path d="M183.700 659v8l6.500-4z" fill="#fff"/>
 </g>
 <!-- tray icons -->
 <rect x="948.500" y="658.500" width="12" height="8" rx="1" fill="#b9c3cf" stroke="#6f7f93" stroke-width=".8"/><path d="M950 661h9M950 663.500h9" stroke="#6f7f93" stroke-width=".8" stroke-dasharray="1.200 .8"/><path d="M954.500 658v-2.500h3" fill="none" stroke="#8d9bad" stroke-width=".8"/>
 <circle cx="973" cy="662" r="6.300" fill="url(#helpG)" stroke="#dfe6f2" stroke-width="1"/>
 <rect x="989" y="656.500" width="4.500" height="3.500" fill="none" stroke="#f2f5fa" stroke-width=".9"/><rect x="991" y="654.500" width="4.500" height="3.500" fill="#8ea7c6" stroke="#f2f5fa" stroke-width=".9"/><path d="M989.800 665h4.400l-2.200 2.600z" fill="#f2f5fa"/>
 <path d="M1005.500 665.500h7l-3.500-4z" fill="#f4f7fb"/>
 <!-- user -->
 <circle cx="1030" cy="658" r="3.300" fill="#f2c89a"/><path d="M1026.500 657.500c0-4 7-4 7 0c-2-1-5-1-7 0z" fill="#2a2a2a"/><path d="M1024 669c0-5 2.500-7 6-7s6 2 6 7z" fill="#3a9ae4"/>
 <!-- QQ -->
 <ellipse cx="1050" cy="663.500" rx="5" ry="6" fill="#1a1a1a"/><ellipse cx="1050" cy="666" rx="3.300" ry="3.600" fill="#f6f6f6"/><path d="M1045 663c2.500 1.600 7.500 1.600 10 0l.5 2c-3 1.500-8 1.500-11 0z" fill="#e0352a"/><ellipse cx="1047" cy="669.700" rx="2.600" ry="1.200" fill="#f0a020"/><ellipse cx="1053" cy="669.700" rx="2.600" ry="1.200" fill="#f0a020"/><circle cx="1048.500" cy="660" r=".9" fill="#fff"/><circle cx="1051.500" cy="660" r=".9" fill="#fff"/>
 <!-- flag -->
 <path d="M1068.500 656v14" stroke="#e8edf4" stroke-width="1.200"/><path d="M1069.500 656.500c3-1.500 5 1.500 8.500 0v6.500c-3.500 1.500-5.500-1.500-8.500 0z" fill="#f4f6fa" stroke="#c8d0dc" stroke-width=".5"/><circle cx="1076.500" cy="667" r="3.800" fill="#e0322a"/><path d="M1074.800 665.300l3.400 3.400M1078.200 665.300l-3.400 3.400" stroke="#fff" stroke-width="1.200"/>
 <!-- network -->
 <rect x="1092.500" y="659.500" width="9.500" height="7.500" fill="#4a7ab8" stroke="#eef2f8" stroke-width="1.200"/><path d="M1095 670.500h5M1097.500 667.500v3" stroke="#eef2f8" stroke-width="1.200"/><rect x="1088.500" y="655" width="5" height="4.500" fill="#8fa9c9" stroke="#eef2f8" stroke-width=".9"/>
 <!-- volume -->
 <path d="M1109.500 660.500h2.500l4-3.500v11l-4-3.500h-2.500z" fill="#f4f6fa" stroke="#9aa8ba" stroke-width=".5"/><path d="M1118 659.500a4 4 0 0 1 0 6M1120 657.500a7 7 0 0 1 0 10" fill="none" stroke="#f0f3f8" stroke-width="1"/>
</svg>
<div class="t" style="left:970.500px;top:655.500px;font-size:10px;font-weight:bold;color:#fff">?</div>

</body>
</html>
